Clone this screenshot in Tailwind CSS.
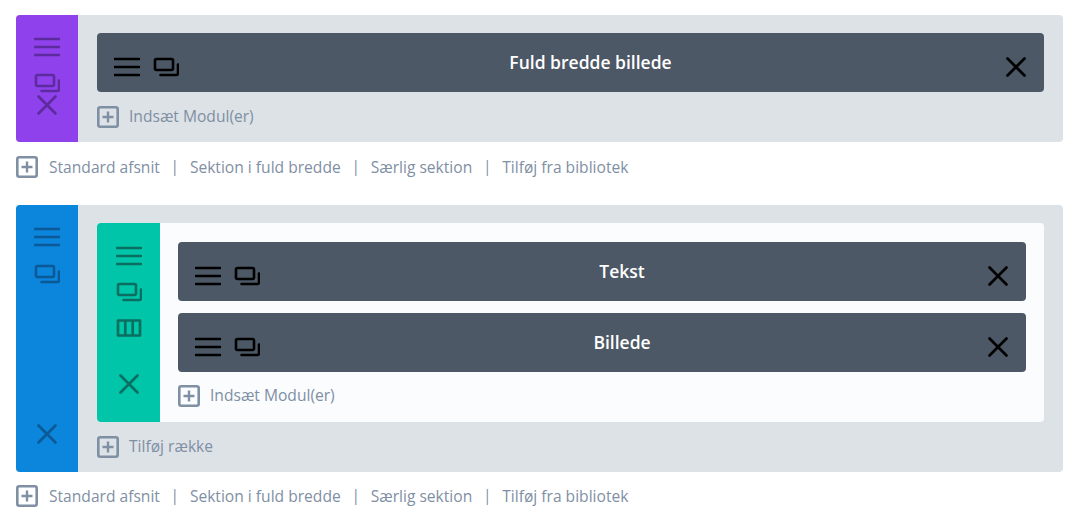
<!DOCTYPE html>
<html lang="da">
<head>
    <meta charset="UTF-8">
    <meta name="viewport" content="width=device-width, initial-scale=1.0">
    <title>Sektioner</title>
    <script src="https://cdn.jsdelivr.net/npm/@tailwindcss/browser@4"></script>
</head>
<body class="bg-white font-['Open_Sans',sans-serif] h-[517px] overflow-hidden">

    <!-- Icon set, reused below with <use> -->
    <svg class="hidden" xmlns="http://www.w3.org/2000/svg">
        <symbol id="menu" viewBox="0 0 26 26"><path d="M1 5h24M1 13h24M1 21h24" fill="none" stroke="currentColor" stroke-width="2.600" stroke-linecap="round"/></symbol>
        <symbol id="copy" viewBox="0 0 26 26"><path d="M3.500 5h15a1.500 1.500 0 0 1 1.500 1.500v8a1.500 1.500 0 0 1-1.500 1.500h-15a1.500 1.500 0 0 1-1.500-1.500v-8a1.500 1.500 0 0 1 1.500-1.500zM25 10.500v9a1.500 1.500 0 0 1-1.500 1.500h-16" fill="none" stroke="currentColor" stroke-width="2.600" stroke-linecap="round"/></symbol>
        <symbol id="close" viewBox="0 0 26 26"><path d="M4.500 4.500l17 17M21.500 4.500l-17 17" fill="none" stroke="currentColor" stroke-width="2.700" stroke-linecap="round"/></symbol>
        <symbol id="cols" viewBox="0 0 26 26"><path d="M2 5.500h22v15h-22zM9.300 5.500v15M16.700 5.500v15" fill="none" stroke="currentColor" stroke-width="2.700" stroke-linejoin="round"/></symbol>
        <symbol id="add" viewBox="0 0 22 22"><rect x="1.300" y="1.300" width="19.400" height="19.400" rx="2" fill="none" stroke="currentColor" stroke-width="2.600"/><path d="M11 5.500v11M5.500 11h11" fill="none" stroke="currentColor" stroke-width="2.400"/></symbol>
    </svg>

    <div class="pt-[15px] pl-4 w-[1063px]">

        <!-- Section: full width -->
        <section class="flex h-[127px] rounded-[4px] overflow-hidden bg-[#dde2e6]">
            <div class="w-[62px] shrink-0 bg-[#8f42ec] text-[#5e2b9e] flex flex-col items-center pt-[19px]">
                <svg class="w-[26px] h-[26px]"><use href="#menu"/></svg>
                <svg class="w-[26px] h-[26px] mt-[10px]"><use href="#copy"/></svg>
                <svg class="w-[26px] h-[26px] -mt-[4px]"><use href="#close"/></svg>
            </div>
            <div class="flex-1 px-[19px] pt-[18px]">
                <div class="grid grid-cols-[1fr_auto_1fr] items-center h-[59px] rounded-[4px] bg-[#4c5866] px-[17px]">
                    <div class="flex gap-[13px] items-center text-black pt-[9px]">
                        <svg class="w-[26px] h-[26px]"><use href="#menu"/></svg>
                        <svg class="w-[26px] h-[26px]"><use href="#copy"/></svg>
                    </div>
                    <span class="text-white text-[17.500px] font-semibold leading-[59px] ml-10">Fuld bredde billede</span>
                    <div class="flex justify-end text-black pt-[9px]">
                        <svg class="w-[26px] h-[26px] -mr-[2px]"><use href="#close"/></svg>
                    </div>
                </div>
                <div class="flex items-center gap-[10px] mt-[13px] text-[#7f8fa4] text-[15.600px] font-medium">
                    <svg class="w-[22px] h-[22px]"><use href="#add"/></svg>
                    <span>Indsæt Modul(er)</span>
                </div>
            </div>
        </section>

        <div class="flex items-center mt-[14px] h-[22px] text-[#7f8fa4] text-[15.600px] font-medium">
            <svg class="w-[22px] h-[22px] mr-[11px]"><use href="#add"/></svg>
            <span class="pt-px">Standard afsnit</span>
            <span class="mx-[10.700px]">|</span>
            <span class="pt-px">Sektion i fuld bredde</span>
            <span class="mx-[10.700px]">|</span>
            <span class="pt-px">Særlig sektion</span>
            <span class="mx-[10.700px]">|</span>
            <span class="pt-px">Tilføj fra bibliotek</span>
        </div>

        <!-- Section: regular with row -->
        <section class="flex h-[267px] mt-[27px] rounded-[4px] overflow-hidden bg-[#dde2e6]">
            <div class="w-[62px] shrink-0 bg-[#0c85dc] text-[#0b5a96] flex flex-col items-center pt-[19px] pb-[25px]">
                <svg class="w-[26px] h-[26px]"><use href="#menu"/></svg>
                <svg class="w-[26px] h-[26px] mt-[11px]"><use href="#copy"/></svg>
                <svg class="w-[26px] h-[26px] mt-auto"><use href="#close"/></svg>
            </div>
            <div class="flex-1 px-[19px] pt-[18px]">
                <div class="flex h-[199px] rounded-[4px] overflow-hidden bg-[#fbfcfe]">
                    <div class="w-[63px] shrink-0 bg-[#00c5a9] text-[#0a6e60] flex flex-col items-center pt-[20px]">
                        <svg class="w-[26px] h-[26px]"><use href="#menu"/></svg>
                        <svg class="w-[26px] h-[26px] mt-[10px]"><use href="#copy"/></svg>
                        <svg class="w-[26px] h-[26px] mt-[10px]"><use href="#cols"/></svg>
                        <svg class="w-[26px] h-[26px] mt-[30px]"><use href="#close"/></svg>
                    </div>
                    <div class="flex-1 px-[18px] pt-[19px]">
                        <div class="grid grid-cols-[1fr_auto_1fr] items-center h-[59px] rounded-[4px] bg-[#4c5866] px-[17px]">
                            <div class="flex gap-[13px] items-center text-black pt-[9px]">
                                <svg class="w-[26px] h-[26px]"><use href="#menu"/></svg>
                                <svg class="w-[26px] h-[26px]"><use href="#copy"/></svg>
                            </div>
                            <span class="text-white text-[17.500px] font-semibold leading-[59px] ml-10">Tekst</span>
                            <div class="flex justify-end text-black pt-[9px]">
                                <svg class="w-[26px] h-[26px] -mr-[2px]"><use href="#close"/></svg>
                            </div>
                        </div>
                        <div class="grid grid-cols-[1fr_auto_1fr] items-center h-[59px] mt-3 rounded-[4px] bg-[#4c5866] px-[17px]">
                            <div class="flex gap-[13px] items-center text-black pt-[9px]">
                                <svg class="w-[26px] h-[26px]"><use href="#menu"/></svg>
                                <svg class="w-[26px] h-[26px]"><use href="#copy"/></svg>
                            </div>
                            <span class="text-white text-[17.500px] font-semibold leading-[59px] ml-10">Billede</span>
                            <div class="flex justify-end text-black pt-[9px]">
                                <svg class="w-[26px] h-[26px] -mr-[2px]"><use href="#close"/></svg>
                            </div>
                        </div>
                        <div class="flex items-center gap-[10px] mt-[12px] text-[#7f8fa4] text-[15.600px] font-medium">
                            <svg class="w-[22px] h-[22px]"><use href="#add"/></svg>
                            <span>Indsæt Modul(er)</span>
                        </div>
                    </div>
                </div>
                <div class="flex items-center gap-[10px] mt-[13px] text-[#7f8fa4] text-[15.600px] font-medium">
                    <svg class="w-[22px] h-[22px]"><use href="#add"/></svg>
                    <span>Tilføj række</span>
                </div>
            </div>
        </section>

        <div class="flex items-center mt-[13px] h-[22px] text-[#7f8fa4] text-[15.600px] font-medium">
            <svg class="w-[22px] h-[22px] mr-[11px]"><use href="#add"/></svg>
            <span class="pt-px">Standard afsnit</span>
            <span class="mx-[10.700px]">|</span>
            <span class="pt-px">Sektion i fuld bredde</span>
            <span class="mx-[10.700px]">|</span>
            <span class="pt-px">Særlig sektion</span>
            <span class="mx-[10.700px]">|</span>
            <span class="pt-px">Tilføj fra bibliotek</span>
        </div>
    </div>
</body>
</html>
